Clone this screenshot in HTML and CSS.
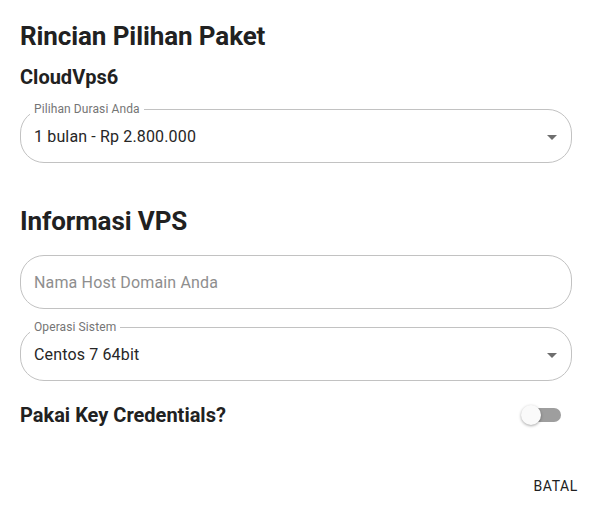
FILE: index.html
```html
<!DOCTYPE html>
<html>
<head>
<meta charset="utf-8">
<link rel="stylesheet" href="styles.css">
</head>
<body>
<div class="page">
  <h1 class="title">Rincian Pilihan Paket</h1>
  <h2 class="subtitle">CloudVps6</h2>
  <div class="field select">
    <span class="label">Pilihan Durasi Anda</span>
    <span class="value">1 bulan - Rp 2.800.000</span>
    <span class="caret"></span>
  </div>

  <h1 class="title second">Informasi VPS</h1>
  <div class="field">
    <span class="placeholder">Nama Host Domain Anda</span>
  </div>
  <div class="field select gap">
    <span class="label">Operasi Sistem</span>
    <span class="value">Centos 7 64bit</span>
    <span class="caret"></span>
  </div>

  <div class="switch-row">
    <span class="subtitle">Pakai Key Credentials?</span>
    <span class="switch"><span class="track"></span><span class="thumb"></span></span>
  </div>

  <div class="actions">
    <button class="btn">Batal</button>
  </div>
</div>
</body>
</html>
```

FILE: styles.css
```css
html, body {
  margin: 0;
  padding: 0;
  background: #ffffff;
}
body {
  font-family: Roboto, "Noto Sans", Arial, sans-serif;
  color: rgba(0, 0, 0, 0.87);
  width: 592px;
  height: 510px;
  overflow: hidden;
}
.page {
  padding: 20px 20px 0 20px;
  display: flex;
  flex-direction: column;
}
.title {
  margin: 0;
  font-size: 26px;
  line-height: 32px;
  font-weight: 700;
  color: #212121;
  letter-spacing: -0.1px;
}
.title.second {
  margin-top: 42px;
  margin-bottom: 18px;
}
.subtitle {
  margin: 13px 0 20px 0;
  font-size: 20px;
  line-height: 24px;
  font-weight: 700;
  color: #212121;
}
.field {
  position: relative;
  height: 54px;
  box-sizing: border-box;
  border: 1px solid #c2c2c2;
  border-radius: 24px;
  display: flex;
  align-items: center;
  padding: 0 13px;
  font-size: 16px;
  letter-spacing: 0.15px;
}
.field.gap {
  margin-top: 18px;
}
.label {
  position: absolute;
  left: 9px;
  top: -8px;
  padding: 0 4px;
  background: #ffffff;
  font-size: 12px;
  line-height: 14px;
  color: #757575;
  letter-spacing: 0.1px;
}
.value {
  color: #262626;
}
.placeholder {
  color: #8e8e8e;
}
.caret {
  position: absolute;
  right: 14px;
  top: 25px;
  width: 0;
  height: 0;
  border-left: 5px solid transparent;
  border-right: 5px solid transparent;
  border-top: 5px solid #6e6e6e;
}
.switch-row {
  margin-top: 22px;
  display: flex;
  align-items: center;
  justify-content: space-between;
}
.switch-row .subtitle {
  margin: 0;
}
.switch {
  position: relative;
  width: 40px;
  height: 20px;
  margin-right: 11px;
}
.track {
  position: absolute;
  left: 4px;
  top: 3px;
  width: 36px;
  height: 14px;
  border-radius: 7px;
  background: #9e9e9e;
}
.thumb {
  position: absolute;
  left: 0;
  top: 0;
  width: 20px;
  height: 20px;
  border-radius: 50%;
  background: #fafafa;
  box-shadow: 0 1px 3px rgba(0, 0, 0, 0.35);
}
.actions {
  display: flex;
  justify-content: flex-end;
  margin-top: 41px;
  margin-right: -14px;
}
.btn {
  background: transparent;
  border: none;
  font-family: Roboto, Arial, sans-serif;
  font-size: 14px;
  font-weight: 400;
  letter-spacing: 0.6px;
  text-transform: uppercase;
  color: #212121;
  height: 36px;
  padding: 0 8px;
}
```
